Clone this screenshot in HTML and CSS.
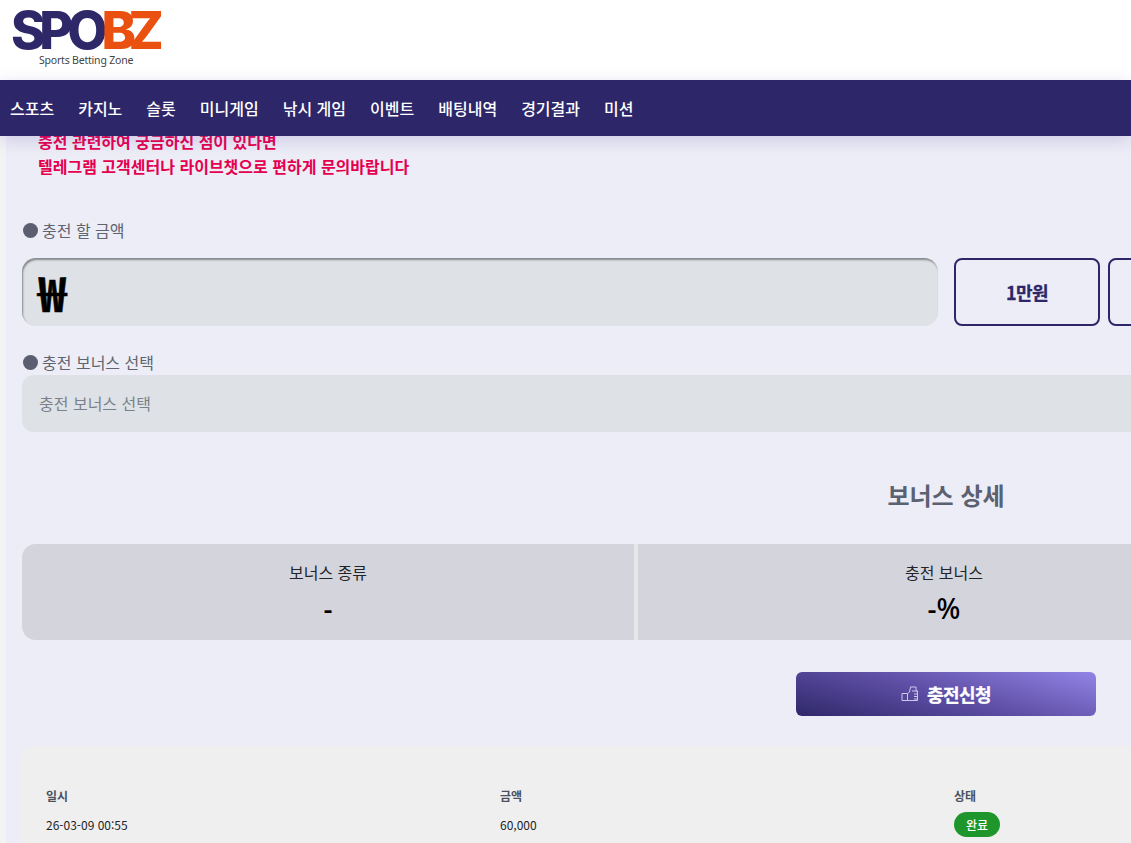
FILE: index.html
```html
<!DOCTYPE html>
<html lang="ko">
<head>
<meta charset="utf-8">
<title>SPOBZ</title>
<link rel="stylesheet" href="styles.css">
</head>
<body>
<header class="top">
  <div class="logo">
    <div class="logo-mark"><span class="logo-spo">SPO</span><span class="logo-bz">BZ</span></div>
    <div class="logo-sub">Sports Betting Zone</div>
  </div>
</header>
<nav class="nav">
  <a>스포츠</a><a>카지노</a><a>슬롯</a><a>미니게임</a><a>낚시 게임</a><a>이벤트</a><a>배팅내역</a><a>경기결과</a><a>미션</a>
</nav>
<main class="main">
  <div class="notice">
    <p>충전 관련하여 궁금하신 점이 있다면</p>
    <p>텔레그램 고객센터나 라이브챗으로 편하게 문의바랍니다</p>
  </div>
  <div class="label label-amount"><i class="dot"></i>충전 할 금액</div>
  <div class="amount-row">
    <div class="amount-input">₩</div>
    <button class="amount-btn">1만원</button>
    <button class="amount-btn">3만원</button>
    <button class="amount-btn">5만원</button>
    <button class="amount-btn">10만원</button>
    <button class="amount-btn">50만원</button>
  </div>
  <div class="label label-bonus"><i class="dot"></i>충전 보너스 선택</div>
  <div class="select">충전 보너스 선택</div>
  <h2 class="detail-title">보너스 상세</h2>
  <div class="bonus-grid">
    <div class="bonus-cell"><div class="bonus-name">보너스 종류</div><div class="bonus-value">-</div></div>
    <div class="bonus-cell"><div class="bonus-name">충전 보너스</div><div class="bonus-value">-%</div></div>
    <div class="bonus-cell"><div class="bonus-name">롤링</div><div class="bonus-value">-%</div></div>
  </div>
  <div class="submit-row">
    <button class="submit">
      <svg class="submit-icon" viewBox="0 0 18 16" width="18" height="16" aria-hidden="true">
        <path d="M1 7.5h5.5v7H1zM6.5 14.5H16.5V5H15V1H9.5L8.5 6 6.5 7.5M11 5h5.5M13 8h3.5M13 10.5h3.5M13 13h3.5" fill="none" stroke="#cfc8ec" stroke-width="1"/>
      </svg>
      충전신청
    </button>
  </div>
  <section class="history">
    <div class="history-grid">
      <div class="th">일시</div><div class="th">금액</div><div class="th">상태</div><div class="th"></div>
      <div class="td">26-03-09 00:55</div><div class="td">60,000</div><div class="td"><span class="badge">완료</span></div><div class="td"></div>
    </div>
  </section>
</main>
</body>
</html>
```
FILE: styles.css
```css
* { box-sizing: border-box; }
html, body { margin: 0; height: 100%; overflow: hidden; }
body {
  background: #f3f3f4;
  font-family: "Noto Sans CJK KR", "Noto Sans", sans-serif;
  color: #212529;
}
.top { height: 80px; background: #fff; padding: 10px 0 0 11px; }
.logo { width: 160px; }
.logo-mark {
  font-family: Inter, "Liberation Sans", sans-serif;
  font-weight: 800;
  font-size: 52px;
  line-height: 41px;
  height: 41px;
  white-space: nowrap;
}
.logo-spo { color: #2e2869; letter-spacing: -6px; }
.logo-bz { color: #ea500f; letter-spacing: -7.5px; margin-left: 0; }
.logo-sub {
  font-family: "Noto Sans", sans-serif;
  font-size: 10.5px;
  line-height: 14px;
  margin: 2px 0 0 28px;
  color: #444;
  letter-spacing: -0.2px;
  white-space: nowrap;
}
.nav {
  position: relative;
  z-index: 2;
  height: 56px;
  background: #2d2769;
  display: flex;
  align-items: center;
  gap: 24px;
  padding-left: 10px;
  box-shadow: 0 4px 16px rgba(90, 60, 170, 0.2);
}
.nav a {
  color: #fff;
  font-size: 16px;
  font-weight: 500;
  white-space: nowrap;
}
.main {
  display: flow-root;
  margin-left: 6px;
  width: 1870px;
  background: #ecedf6;
  padding: 0 0 0 16px;
  height: 707px;
}
.notice {
  margin: -7px 0 0 16px;
  color: #e5004f;
  font-size: 16px;
  font-weight: 700;
  line-height: 25px;
}
.notice p { margin: 0; }
.label {
  display: flex;
  align-items: center;
  gap: 4px;
  color: #5f6470;
  font-size: 16px;
  line-height: 22px;
  padding-left: 1px;
}
.label-amount { margin-top: 40px; }
.label-bonus { height: 22px; margin-top: 25px; }
.dot {
  width: 15px;
  height: 15px;
  border-radius: 50%;
  background: #5a5e70;
  flex: none;
}
.amount-row { display: flex; gap: 8px; margin-top: 17px; height: 68px; }
.amount-input {
  width: 916px;
  margin-right: 8px;
  background: #dee1e5;
  border-radius: 14px;
  box-shadow: inset 1px 2px 2px #87888c;
  color: #000;
  font-size: 48px;
  font-weight: 700;
  line-height: 66px;
  padding-left: 16px;
  -webkit-text-stroke: 0.5px #000;
}
.amount-btn {
  width: 146px;
  flex: none;
  background: transparent;
  border: 2px solid #2d2769;
  border-radius: 8px;
  color: #2d2769;
  font: 700 18px/1 "Noto Sans CJK KR", sans-serif;
  letter-spacing: -0.5px;
  -webkit-text-stroke: 0.3px #2d2769;
}
.select {
  width: 1848px;
  height: 57px;
  margin-top: 2px;
  background: #dee1e5;
  border-radius: 12px;
  color: #7b818a;
  font-size: 16px;
  line-height: 57px;
  padding-left: 17px;
}
.detail-title {
  margin: 45px 0 0;
  width: 1848px;
  text-align: center;
  color: #5a6170;
  font-size: 24px;
  font-weight: 700;
  line-height: 36px;
}
.bonus-grid {
  display: grid;
  grid-template-columns: repeat(3, 612px);
  gap: 4px;
  width: 1848px;
  margin-top: 31px;
  height: 96px;
  border-radius: 14px;
  overflow: hidden;
  background: #e6e7ea;
}
.bonus-cell {
  background: #d4d4dd;
  text-align: center;
  padding-top: 17px;
}
.bonus-name { color: #212529; font-size: 16px; line-height: 22px; }
.bonus-value {
  color: #000;
  font-size: 28px;
  font-weight: 500;
  line-height: 36px;
  margin-top: 7px;
  font-family: "Noto Sans", sans-serif;
}
.submit-row { display: flex; justify-content: center; width: 1848px; margin-top: 32px; }
.submit {
  width: 300px;
  height: 44px;
  border: 0;
  border-radius: 6px;
  background: linear-gradient(195deg, #9284e6 0%, #5f4fa6 50%, #2f2869 100%);
  color: #fff;
  font: 700 18px/1 "Noto Sans CJK KR", sans-serif;
  letter-spacing: -0.6px;
  -webkit-text-stroke: 0.3px #fff;
  display: flex;
  align-items: center;
  justify-content: center;
  gap: 8px;
}
.submit-icon { flex: none; }
.history {
  width: 1848px;
  margin: 30px 0 0 -2px;
  height: 200px;
  background: #efefef;
  border-radius: 14px;
  padding: 37px 26px;
}
.history-grid {
  display: grid;
  grid-template-columns: repeat(4, 454px);
  grid-auto-rows: min-content;
}
.th { color: #4a5160; font-size: 12px; font-weight: 700; line-height: 26px; height: 27px; }
.td { color: #212529; font-size: 12px; line-height: 30px; height: 30px; font-family: "Noto Sans CJK KR", "Noto Sans", sans-serif; }
.badge {
  display: inline-block;
  width: 46px;
  height: 25px;
  border-radius: 13px;
  background: #1f962b;
  color: #fff;
  font-size: 12px;
  font-weight: 500;
  line-height: 25px;
  text-align: center;
}
```
